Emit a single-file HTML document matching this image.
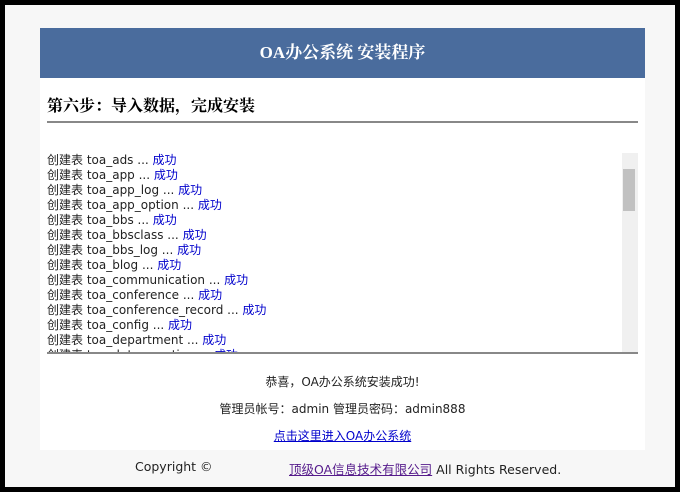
<!DOCTYPE html>
<html><head><meta charset="utf-8"><style>
body{margin:0;width:680px;height:492px;background:#000;overflow:hidden;font-family:"DejaVu Sans","Noto Sans CJK SC",sans-serif;}
.outer{position:absolute;left:5px;top:5px;width:670px;height:482px;background:#f7f7f7;}
.panel{position:absolute;left:40px;top:28px;width:605px;height:422px;background:#fff;}
.hdr{position:absolute;left:0;top:0;width:605px;height:50px;background:#4a6c9d;color:#fff;font:bold 17px "Liberation Serif","Noto Serif CJK SC",serif;text-align:center;line-height:50px;}
.h2{position:absolute;left:7px;top:65px;font:bold 16px "Liberation Serif","Noto Serif CJK SC",serif;color:#000;}
.hr{position:absolute;left:7px;top:93px;width:591px;height:2px;background:#888;}
.box{position:absolute;left:7px;top:125px;width:591px;height:199px;border-bottom:2px solid #888;overflow:hidden;font-size:12px;line-height:15px;color:#222;}
.box .t{position:absolute;left:0;top:0;}
.box span{color:#0000cc}
.sb{position:absolute;right:0;top:0;width:16px;height:199px;background:#f0f0f0;}
.thumb{position:absolute;left:1px;top:16px;width:12px;height:42px;background:#c1c1c1;}
.c{position:absolute;left:0;width:605px;text-align:center;font-size:12px;color:#222;}
a{color:#0000cc}
.foot{position:absolute;left:0;top:459px;width:680px;font-size:12.5px;color:#222;}
</style></head><body>
<div class="outer"></div>
<div class="panel">
<div class="hdr">OA办公系统 安装程序</div>
<div class="h2">第六步：导入数据，完成安装</div>
<div class="hr"></div>
<div class="box"><div class="t">
创建表 toa_ads ... <span>成功</span><br>
创建表 toa_app ... <span>成功</span><br>
创建表 toa_app_log ... <span>成功</span><br>
创建表 toa_app_option ... <span>成功</span><br>
创建表 toa_bbs ... <span>成功</span><br>
创建表 toa_bbsclass ... <span>成功</span><br>
创建表 toa_bbs_log ... <span>成功</span><br>
创建表 toa_blog ... <span>成功</span><br>
创建表 toa_communication ... <span>成功</span><br>
创建表 toa_conference ... <span>成功</span><br>
创建表 toa_conference_record ... <span>成功</span><br>
创建表 toa_config ... <span>成功</span><br>
创建表 toa_department ... <span>成功</span><br>
创建表 toa_duty_meeting ... <span>成功</span>
</div><div class="sb"><div class="thumb"></div></div></div>
<div class="c" style="top:345px">恭喜，OA办公系统安装成功!</div>
<div class="c" style="top:372px">管理员帐号：admin 管理员密码：admin888</div>
<div class="c" style="top:399px"><a href="#">点击这里进入OA办公系统</a></div>
</div>
<div class="foot"><span style="position:absolute;left:135px">Copyright ©</span><span style="position:absolute;left:289px"><a href="#" style="color:#551a8b">顶级OA信息技术有限公司</a> All Rights Reserved.</span></div>
</body></html>
